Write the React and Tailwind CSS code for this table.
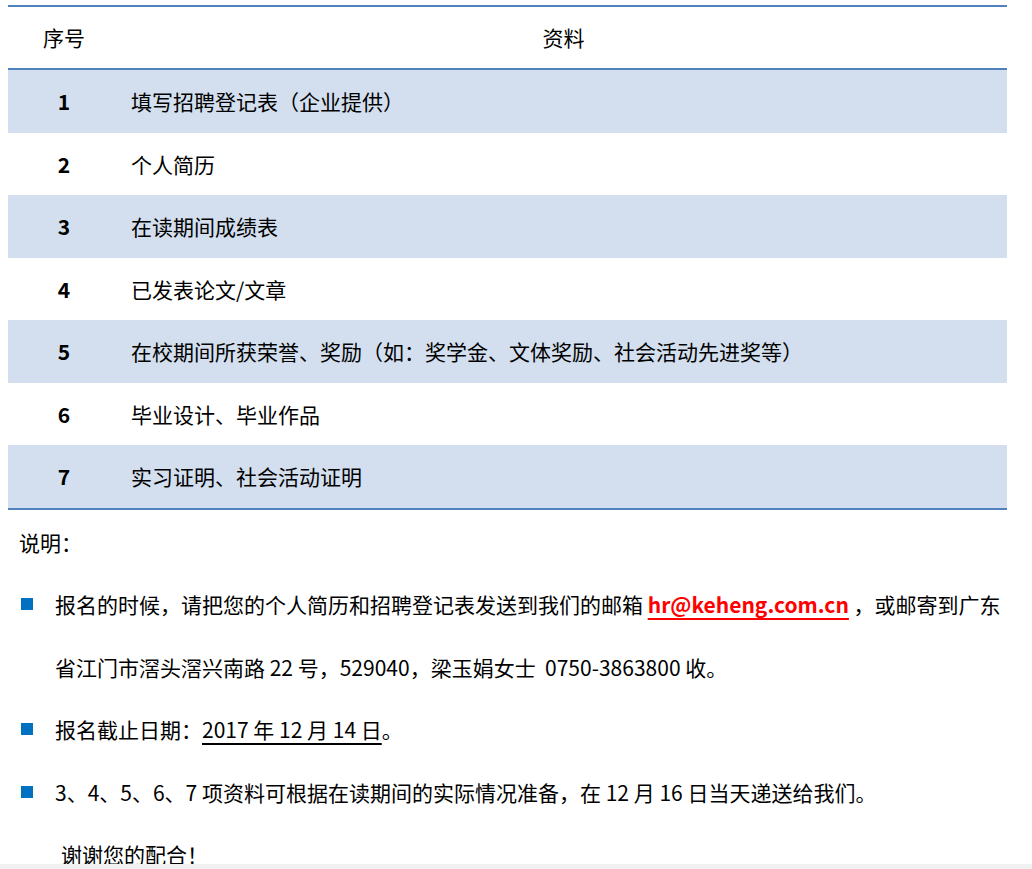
import React from 'react';

const rows = [
  '填写招聘登记表（企业提供）',
  '个人简历',
  '在读期间成绩表',
  '已发表论文/文章',
  '在校期间所获荣誉、奖励（如：奖学金、文体奖励、社会活动先进奖等）',
  '毕业设计、毕业作品',
  '实习证明、社会活动证明',
];

const Bullet = () => (
  <span className="absolute left-[21px] top-[25px] w-[12px] h-[12px] bg-[#0070c0]" />
);

export default function App() {
  return (
    <div
      className="w-[1032px] h-[869px] bg-white text-black text-[21px] overflow-hidden relative"
      style={{ fontFamily: '"Noto Sans CJK SC", "Noto Sans", sans-serif' }}
    >
      <div className="pt-[5px] pl-[8px] w-[1007px]">
        {/* table */}
        <div className="border-t-2 border-b-2 border-[#4f81bd]">
          <div className="flex h-[63px] items-center border-b-2 border-[#4f81bd]">
            <div className="w-[112px] text-center">序号</div>
            <div className="flex-1 text-center">资料</div>
          </div>
          {rows.map((text, i) => (
            <div
              key={i}
              className={`flex h-[62.5px] items-center pt-[1px] ${i % 2 === 0 ? 'bg-[#d3dfee]' : 'bg-white'}`}
            >
              <div className="w-[112px] text-center font-bold">{i + 1}</div>
              <div className="flex-1 pl-[11px]">{text}</div>
            </div>
          ))}
        </div>
      </div>

      {/* notes */}
      <div className="mt-[1px] leading-[62.5px]">
        <div className="pl-[19px]">说明：</div>
        <div className="relative pl-[55px]">
          <Bullet />
          <p className="whitespace-nowrap">
            报名的时候，请把您的个人简历和招聘登记表发送到我们的邮箱{' '}
            <span className="text-[#ff0000] font-bold underline decoration-[#ff0000] decoration-2 underline-offset-[5px]">
              hr@keheng.com.cn
            </span>
            {' '}，或邮寄到广东
            <br />
            省江门市滘头滘兴南路 22 号，529040，梁玉娟女士&nbsp; 0750-3863800 收。
          </p>
        </div>
        <div className="relative pl-[55px]">
          <Bullet />
          <p>
            报名截止日期：
            <span className="underline decoration-2 underline-offset-[5px]">2017 年 12 月 14 日</span>。
          </p>
        </div>
        <div className="relative pl-[55px]">
          <Bullet />
          <p className="whitespace-nowrap">3、4、5、6、7 项资料可根据在读期间的实际情况准备，在 12 月 16 日当天递送给我们。</p>
        </div>
        <div className="pl-[61px]">谢谢您的配合！</div>
      </div>

      <div className="absolute left-0 right-0 bottom-0 h-[5px] bg-[#f0f0f0]" />
    </div>
  );
}
